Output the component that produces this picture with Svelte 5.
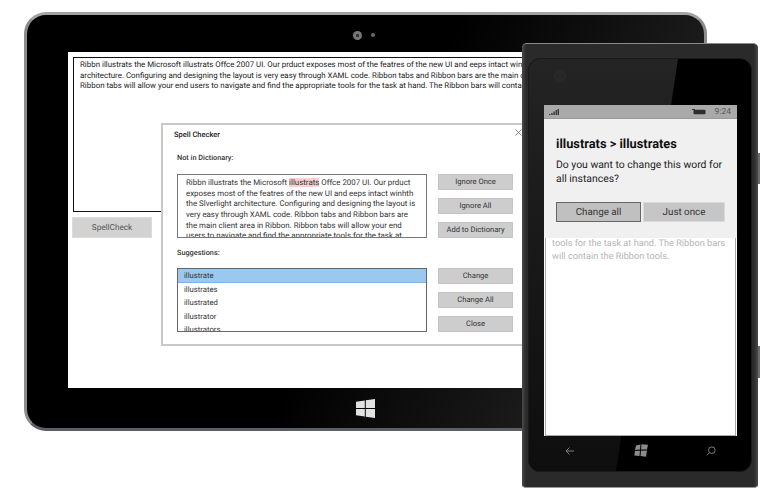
<script>
	const mainLines = [
		'Ribbn illustrats the Microsoft illustrats Offce 2007 UI. Our prduct exposes most of the featres of the new UI and eeps intact winhth the Slverlight',
		'architecture. Configuring and designing the layout is very easy through XAML code. Ribbon tabs and Ribbon bars are the main client area in Ribbon.',
		'Ribbon tabs will allow your end users to navigate and find the appropriate tools for the task at hand. The Ribbon bars will contain the Ribbon tools.'
	];
	const topActions = ['Ignore Once', 'Ignore All', 'Add to Dictionary'];
	const bottomActions = ['Change', 'Change All', 'Close'];
	const suggestions = ['illustrate', 'illustrates', 'illustrated', 'illustrator', 'illustrators'];
</script>

<div class="stage">
	<!-- tablet -->
	<div class="tablet">
		<div class="cam-row">
			<span class="lens"></span>
			<span class="sensor"></span>
		</div>
		<div class="screen">
			<div class="doc">
				{#each mainLines as line}
					<div class="doc-line">{line}</div>
				{/each}
			</div>
			<button class="btn spell">SpellCheck</button>

			<div class="dialog">
				<div class="dialog-head">
					<span>Spell Checker</span>
					<svg class="close" width="7" height="7" viewBox="0 0 7 7"><path d="M0.5 0.5L6.5 6.5M6.5 0.5L0.5 6.5" stroke="#777" stroke-width="0.8" /></svg>
				</div>
				<div class="label first">Not in Dictionary:</div>
				<div class="dialog-row">
					<div class="misspelt">
						Ribbn illustrats the Microsoft <span class="hl">illustrats</span> Offce 2007 UI. Our prduct<br />
						exposes most of the featres of the new UI and eeps intact winhth<br />
						the Slverlight architecture. Configuring and designing the layout is<br />
						very easy through XAML code. Ribbon tabs and Ribbon bars are<br />
						the main client area in Ribbon. Ribbon tabs will allow your end<br />
						users to navigate and find the appropriate tools for the task at
					</div>
					<div class="actions">
						{#each topActions as a}
							<button class="btn">{a}</button>
						{/each}
					</div>
				</div>
				<div class="label second">Suggestions:</div>
				<div class="dialog-row">
					<div class="list">
						{#each suggestions as s, i}
							<div class="item" class:selected={i === 0}>{s}</div>
						{/each}
					</div>
					<div class="actions lower">
						{#each bottomActions as a}
							<button class="btn">{a}</button>
						{/each}
					</div>
				</div>
			</div>
		</div>
		<div class="home">
			<svg width="19" height="19" viewBox="0 0 19 19">
				<path d="M0 2.7L8.8 1.4V9H0zM9.8 1.3L19 0V9H9.8zM0 10H8.8V17.6L0 16.3zM9.8 10H19V19L9.8 17.7z" fill="#e2e2e2" />
			</svg>
		</div>
	</div>

	<!-- phone -->
	<div class="phone">
		<span class="side-key k1"></span>
		<span class="side-key k2"></span>
		<div class="glass">
			<div class="glare"></div>
			<span class="front-cam"></span>
			<div class="wp-screen">
				<div class="status">
					<svg width="10" height="6" viewBox="0 0 10 6"><path d="M0 5h1.500v1H0zM2.200 4h1.500v2H2.200zM4.400 2.500h1.500V6H4.400zM6.600 1H8v5H6.600zM8.500 0H10v6H8.500z" fill="#3c3c3c" /></svg>
					<span class="status-right">
						<svg width="14" height="6" viewBox="0 0 14 6"><rect x="1.500" y="0.800" width="12" height="4.500" rx="1" fill="#2e2e2e" /><rect x="0" y="0" width="3" height="1" fill="#2e2e2e" /></svg>
						<span>9:24</span>
					</span>
				</div>
				<div class="prompt">
					<div class="prompt-title">illustrats &gt; illustrates</div>
					<div class="prompt-text">Do you want to change this word for<br />all instances?</div>
					<div class="prompt-btns">
						<button class="wp-btn active">Change all</button>
						<button class="wp-btn">Just once</button>
					</div>
				</div>
				<div class="wp-doc">tools for the task at hand. The Ribbon bars<br />will contain the Ribbon tools.</div>
			</div>
			<div class="softkeys">
				<svg width="10" height="10" viewBox="0 0 10 10"><path d="M9 5H1.200M4.500 1.500L1 5L4.500 8.500" fill="none" stroke="#8a8a8a" stroke-width="0.9" /></svg>
				<svg width="14" height="13" viewBox="0 0 14 13"><path d="M2 1.500L6.500 0.400L6 5.600L1 6zM7.500 0.300L14 0.800L13 5.500L7 5.600zM1 7L6 6.700L5.500 12L0.300 11.500zM7 6.700L13 6.600L12 12.800L6.500 12z" fill="#8c8c8c" /></svg>
				<svg width="10" height="10" viewBox="0 0 10 10"><circle cx="5.800" cy="4.200" r="3.300" fill="none" stroke="#8a8a8a" stroke-width="0.9" /><path d="M3.400 6.600L0.800 9.300" stroke="#8a8a8a" stroke-width="0.9" /></svg>
			</div>
		</div>
	</div>
</div>

<style>
	:global(body) {
		margin: 0;
		background: #fff;
	}

	.stage {
		position: relative;
		width: 780px;
		height: 500px;
		overflow: hidden;
		background: #fff;
		font-family: Roboto, 'Noto Sans', sans-serif;
		text-rendering: geometricPrecision;
		color: #222;
	}

	button {
		font-family: inherit;
		text-rendering: inherit;
		cursor: pointer;
	}

	/* tablet */
	.tablet {
		position: absolute;
		left: 24px;
		top: 12px;
		width: 683px;
		height: 419px;
		box-sizing: border-box;
		padding: 0;
		border-radius: 22px;
		background: linear-gradient(115deg, #000 0%, #000 50%, #2e2e2e 100%);
		border-top: 3px solid #a3a3a3;
		border-left: 3px solid #8c8c8c;
		border-bottom: 3px solid #5b6067;
		border-right: 3px solid #8c8c8c;
		display: flex;
		flex-direction: column;
	}

	.cam-row {
		flex: none;
		height: 37px;
		box-sizing: border-box;
		display: flex;
		align-items: center;
		gap: 9px;
		padding-left: 326px;
		padding-top: 3px;
	}

	.lens {
		width: 9px;
		height: 9px;
		border-radius: 50%;
		background: radial-gradient(circle at 50% 50%, #3a3048 0 25%, #777 30% 100%);
	}

	.sensor {
		width: 4px;
		height: 4px;
		border-radius: 50%;
		background: #6a6a6a;
	}

	.screen {
		position: relative;
		flex: none;
		margin-left: 41px;
		width: 620px;
		height: 336px;
		box-sizing: border-box;
		padding: 5px;
		background: #fff;
		overflow: hidden;
	}

	.doc {
		width: 100%;
		height: 155px;
		box-sizing: border-box;
		border: 1.5px solid #111;
		padding: 2px 6px;
		overflow: hidden;
		font-size: 7.900px;
		line-height: 10.700px;
		color: #222;
	}

	.doc-line {
		white-space: nowrap;
	}

	.btn {
		display: block;
		box-sizing: border-box;
		width: 75px;
		height: 16px;
		padding: 0;
		border: 1px solid #c4c4c4;
		background: #cdcdcd;
		color: #333;
		font-size: 7.600px;
		line-height: 14px;
	}

	.spell {
		margin: 5px 0 0 -1px;
		width: 80px;
		height: 21px;
		background: #d2d2d2;
		border-color: #dcdcdc;
		font-size: 8.200px;
		color: #555;
	}

	.dialog {
		position: absolute;
		left: 93px;
		top: 71px;
		width: 440px;
		height: 223px;
		box-sizing: border-box;
		border: 2px solid #c9c9c9;
		background: #fff;
		padding: 3px 0 0 11px;
	}

	.dialog-head {
		position: relative;
		height: 14px;
		font-size: 7.500px;
		font-weight: 500;
		line-height: 14px;
		color: #222;
	}

	.close {
		position: absolute;
		left: 341px;
		top: 1px;
	}

	.label {
		font-size: 7.300px;
		font-weight: 500;
		line-height: 12px;
		margin-left: 3px;
		color: #333;
	}

	.first {
		margin-top: 10px;
		margin-bottom: 10px;
	}

	.second {
		margin-top: 9px;
		margin-bottom: 9px;
	}

	.dialog-row {
		display: flex;
		gap: 11px;
		margin-left: 3px;
	}

	.misspelt {
		box-sizing: border-box;
		width: 250px;
		height: 64px;
		padding: 3px 0 0 8px;
		border: 1px solid #777;
		overflow: hidden;
		white-space: nowrap;
		font-size: 7.900px;
		line-height: 10.670px;
		color: #333;
	}

	.hl {
		background: #f8d0d0;
	}

	.actions {
		display: flex;
		flex-direction: column;
		gap: 8px;
	}

	.list {
		box-sizing: border-box;
		width: 250px;
		height: 64px;
		border: 1px solid #666;
		overflow: hidden;
		font-size: 7.700px;
		line-height: 13.300px;
		color: #333;
	}

	.item {
		padding-left: 6px;
	}

	.selected {
		background: #9bc8ef;
		border-bottom: 1px solid #7fb4e2;
		box-sizing: border-box;
		height: 14px;
	}

	/* phone */
	.phone {
		position: absolute;
		left: 522px;
		top: 43px;
		width: 236px;
		height: 445px;
		box-sizing: border-box;
		padding: 14px 6px 15px;
		border-radius: 5px 5px 4px 4px;
		background:
			linear-gradient(90deg, #4a4a4a 0, #2a2a2a 4px, #2a2a2a 232px, #4a4a4a 236px),
			#2a2a2a;
		border-top: 1px solid #8a8a8a;
		border-bottom: 1px solid #999;
	}

	.side-key {
		position: absolute;
		left: 236px;
		width: 2px;
		background: #6a6a6a;
	}

	.k1 {
		top: 109px;
		height: 31px;
	}

	.k2 {
		top: 302px;
		height: 32px;
	}

	.glass {
		position: relative;
		height: 100%;
		box-sizing: border-box;
		padding: 46px 14px 0 15px;
		border-radius: 12px;
		background: #000;
		overflow: hidden;
		display: flex;
		flex-direction: column;
		border: 1px solid #1a1a1a;
	}

	.glare {
		position: absolute;
		left: 0;
		top: 0;
		width: 150px;
		height: 100%;
		background: linear-gradient(180deg, #242424 0%, #1c1c1c 30%, #0e0e0e 100%);
		clip-path: polygon(0 0, 149px 0, 87px 100%, 0 100%);
	}

	.front-cam {
		position: absolute;
		left: 25px;
		top: 11px;
		width: 10px;
		height: 10px;
		border-radius: 50%;
		background: #262626;
		border: 1px solid #2e2e2e;
	}

	.wp-screen {
		position: relative;
		height: 331px;
		flex: none;
		background: #fff;
		display: flex;
		flex-direction: column;
	}

	.status {
		height: 14px;
		background: #a9a9a9;
		display: flex;
		align-items: center;
		justify-content: space-between;
		padding: 0 6px 0 5px;
		font-size: 8.500px;
		color: #555;
		flex: none;
		border-bottom: 1px solid #999;
		box-sizing: border-box;
	}

	.status-right {
		display: flex;
		align-items: center;
		gap: 9px;
	}

	.prompt {
		height: 119px;
		box-sizing: border-box;
		background: #f0f0f0;
		padding: 18px 11px 0 12px;
		flex: none;
	}

	.prompt-title {
		font-size: 12.800px;
		font-weight: 700;
		line-height: 16px;
		color: #111;
		white-space: nowrap;
	}

	.prompt-text {
		margin-top: 5px;
		font-size: 10.400px;
		line-height: 14px;
		color: #222;
		white-space: nowrap;
	}

	.prompt-btns {
		display: flex;
		gap: 2px;
		margin-top: 16px;
	}

	.wp-btn {
		box-sizing: border-box;
		width: 82px;
		height: 20px;
		padding: 0;
		border: 1px solid #dadada;
		background: #c6c6c6;
		font-size: 9.800px;
		color: #333;
	}

	.wp-btn.active {
		width: 85px;
		border: 1.500px solid #666;
		background: #c0c0c0;
	}

	.wp-doc {
		flex: 1;
		margin: 0 1px;
		border: 1px solid #aaa;
		border-top: none;
		padding: 0 6px;
		font-size: 9.200px;
		line-height: 12.600px;
		color: #b5b5b5;
		background: #fff;
		white-space: nowrap;
	}

	.softkeys {
		position: relative;
		flex: 1;
		display: flex;
		align-items: center;
		justify-content: space-between;
		padding: 0 21px 6px 21px;
	}

	.home {
		flex: 1;
		display: flex;
		align-items: center;
		padding-left: 329px;
	}
</style>
